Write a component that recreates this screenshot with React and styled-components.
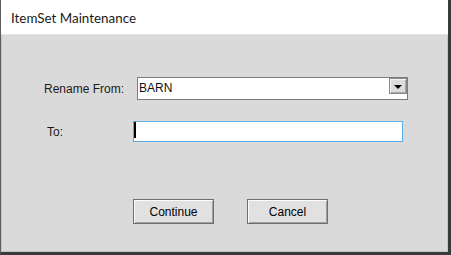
import React from "react";
import styled, { createGlobalStyle } from "styled-components";

const GlobalStyle = createGlobalStyle`
  html, body {
    margin: 0;
    padding: 0;
    background: #ffffff;
  }
  * {
    box-sizing: border-box;
  }
`;

const Window = styled.div`
  width: 451px;
  height: 255px;
  display: flex;
  flex-direction: column;
  border-left: 1px solid #5e5e5e;
  border-right: 3px solid #3a3a3a;
  border-bottom: 3px solid #3a3a3a;
  background: #dadada;
  font-family: "Liberation Sans", Arial, sans-serif;
  font-size: 12px;
  color: #000;
  overflow: hidden;
`;

const TitleBar = styled.div`
  height: 35px;
  flex: none;
  padding: 10px 0 0 10px;
  background: #ffffff;
  border-bottom: 1px solid #e4e4e4;
  font-family: Lato, "Noto Sans", sans-serif;
  font-size: 13.4px;
  line-height: 16px;
  color: #1b1b1b;
`;

const Body = styled.div`
  flex: 1;
  display: flex;
  flex-direction: column;
  padding-top: 42px;
  box-shadow: inset 1px 0 #c4c4c4, inset -1px -1px #c4c4c4;
`;

const Row = styled.div`
  display: flex;
  align-items: center;
  padding-left: ${(p) => p.$indent}px;
  margin-bottom: ${(p) => p.$gap || 0}px;
`;

const Label = styled.span`
  width: ${(p) => p.$width}px;
  flex: none;
  color: #1a1a1a;
`;

const Combo = styled.div`
  width: 271px;
  height: 23px;
  display: flex;
  background: #fff;
  border: 1px solid #7c7c7c;
`;

const ComboText = styled.span`
  flex: 1;
  padding-left: 1px;
  line-height: 21px;
  color: #111;
`;

const DropButton = styled.div`
  width: 18px;
  height: 16px;
  display: flex;
  align-items: center;
  justify-content: center;
  background: #dcdcdc;
  border: 1px solid #8a8a8a;
  box-shadow: inset 1px 1px #f4f4f4, inset -1px -1px #a8a8a8;
`;

const Arrow = styled.span`
  width: 0;
  height: 0;
  margin-top: 1px;
  border-left: 4px solid transparent;
  border-right: 4px solid transparent;
  border-top: 4px solid #000;
`;

const TextBox = styled.div`
  width: 270px;
  height: 21px;
  display: flex;
  align-items: flex-start;
  background: #fff;
  border: 1px solid #5caee8;
`;

const Caret = styled.span`
  width: 2px;
  height: 16px;
  background: #000;
`;

const ButtonRow = styled.div`
  display: flex;
  gap: 33px;
  padding-left: 132px;
`;

const Button = styled.button`
  width: 81px;
  height: 25px;
  padding: 0;
  font-family: "Liberation Sans", Arial, sans-serif;
  font-size: 12px;
  color: #000;
  background: #e1e1e1;
  border: 1px solid #6f6f6f;
  box-shadow: inset 1px 1px #fbfbfb, inset -1px -1px #a0a0a0;
`;

export default function App() {
  return (
    <>
      <GlobalStyle />
      <Window>
        <TitleBar>ItemSet Maintenance</TitleBar>
        <Body>
          <Row $indent={43} $gap={21}>
            <Label $width={93}>Rename From:</Label>
            <Combo>
              <ComboText>BARN</ComboText>
              <DropButton>
                <Arrow />
              </DropButton>
            </Combo>
          </Row>
          <Row $indent={46} $gap={57}>
            <Label $width={86}>To:</Label>
            <TextBox>
              <Caret />
            </TextBox>
          </Row>
          <ButtonRow>
            <Button>Continue</Button>
            <Button>Cancel</Button>
          </ButtonRow>
        </Body>
      </Window>
    </>
  );
}
